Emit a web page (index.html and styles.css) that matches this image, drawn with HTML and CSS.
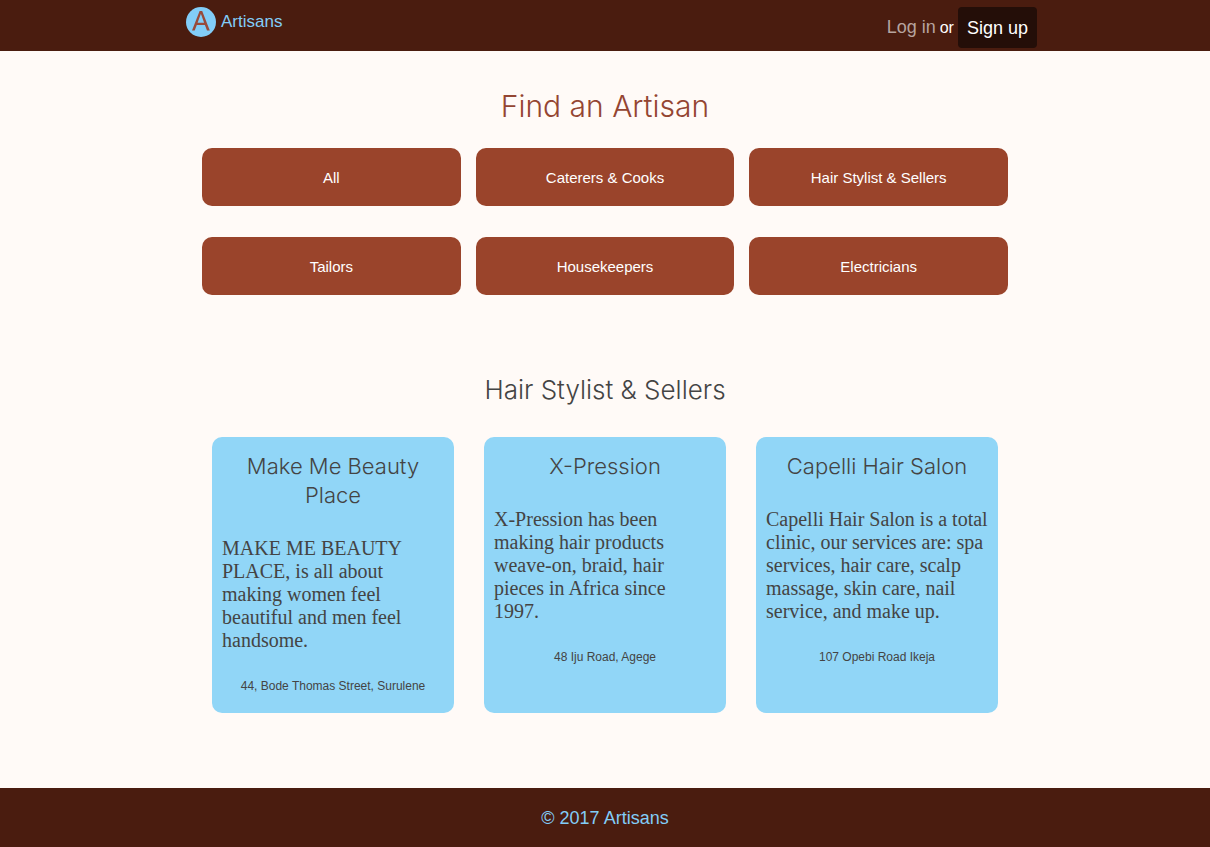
FILE: index.html
```html
<!DOCTYPE html>
<html lang="en">
<head>
<meta charset="utf-8">
<title>Artisans</title>
<meta name="viewport" content="width=device-width, initial-scale=1">
<link rel="stylesheet" href="styles.css">
</head>
<body>
<header class="site-header">
  <div class="header-inner">
    <a class="brand" href="#">
      <svg class="brand-logo" viewBox="0 0 30 30" aria-hidden="true">
        <circle cx="15" cy="15" r="15" fill="#82cdf8"/>
        <path d="M6 23.5 L13.6 4 H16.2 L23.8 23.5 H21 L18.9 17.9 H10.8 L8.7 23.5 Z M11.6 15.7 H18.1 L14.9 6.8 Z" fill="#984a3b" fill-rule="evenodd"/>
      </svg>
      <span>Artisans</span>
    </a>
    <nav class="account">
      <a class="login" href="#">Log in</a>
      <span class="or">or</span>
      <button class="signup" type="button">Sign up</button>
    </nav>
  </div>
</header>
<main class="main">
  <h1 class="page-title">Find an Artisan</h1>
  <div class="categories">
    <button class="category" type="button">All</button>
    <button class="category" type="button">Caterers &amp; Cooks</button>
    <button class="category" type="button">Hair Stylist &amp; Sellers</button>
    <button class="category" type="button">Tailors</button>
    <button class="category" type="button">Housekeepers</button>
    <button class="category" type="button">Electricians</button>
  </div>
  <h2 class="section-title">Hair Stylist &amp; Sellers</h2>
  <div class="cards">
    <article class="card">
      <h3 class="card-title">Make Me Beauty Place</h3>
      <p class="card-text">MAKE ME BEAUTY PLACE, is all about making women feel beautiful and men feel handsome.</p>
      <p class="card-address">44, Bode Thomas Street, Surulene</p>
    </article>
    <article class="card">
      <h3 class="card-title">X-Pression</h3>
      <p class="card-text">X-Pression has been making hair products weave-on, braid, hair pieces in Africa since<br>1997.</p>
      <p class="card-address">48 Iju Road, Agege</p>
    </article>
    <article class="card">
      <h3 class="card-title">Capelli Hair Salon</h3>
      <p class="card-text">Capelli Hair Salon is a total clinic, our services are: spa services, hair care, scalp massage, skin care, nail service, and make up.</p>
      <p class="card-address">107 Opebi Road Ikeja</p>
    </article>
  </div>
</main>
<footer class="site-footer">© 2017 Artisans</footer>
</body>
</html>
```
FILE: styles.css
```css
* { box-sizing: border-box; }
body {
  margin: 0;
  min-height: 100vh;
  display: flex;
  flex-direction: column;
  background: #fffaf7;
  color: #444;
  font-family: "Liberation Sans", Arial, sans-serif;
}
button { font: inherit; border: 0; cursor: pointer; }
a { text-decoration: none; }

.site-header { background: #4a1c0f; }
.header-inner {
  max-width: 864px;
  margin: 0 auto;
  padding: 7px 0 3px 13px;
  display: flex;
  justify-content: space-between;
  align-items: flex-start;
}
.brand {
  display: flex;
  align-items: center;
  gap: 5px;
  color: #82cdf8;
  font-size: 17px;
}
.brand-logo { width: 30px; height: 30px; }
.account {
  display: flex;
  align-items: center;
  gap: 4px;
  color: #fff;
}
.login { color: #b7a49f; font-size: 18px; }
.or { font-size: 16px; }
.signup {
  padding: 11px 9px 9px;
  border-radius: 4px;
  background: #240e08;
  color: #fff;
  font-size: 18px;
  line-height: 21px;
}

.main { flex: 1; padding: 35px 16px 75px; }
.page-title, .section-title, .card-title {
  margin: 0;
  font-family: Inter, "Liberation Sans", sans-serif;
  font-weight: 300;
  text-align: center;
}
.page-title {
  color: #944532;
  font-size: 30px;
  line-height: 40px;
}
.categories {
  max-width: 806px;
  margin: 22px auto 0;
  display: grid;
  grid-template-columns: repeat(3, 1fr);
  gap: 31px 15px;
}
.category {
  padding: 20px 10px 18px;
  border-radius: 10px;
  background: #9a442b;
  color: #fff;
  font-size: 15px;
  line-height: 20px;
}
.section-title {
  margin-top: 77px;
  font-size: 26px;
  line-height: 36px;
}
.cards {
  max-width: 786px;
  margin: 29px auto 0;
  display: grid;
  grid-template-columns: repeat(3, 1fr);
  gap: 30px;
}
.card {
  padding: 15px 10px 20px;
  border-radius: 10px;
  background: #91d6f7;
}
.card-title { font-size: 22px; line-height: 29px; }
.card-text {
  margin: 27px 0 0;
  font-family: "Liberation Serif", "Times New Roman", serif;
  font-size: 20px;
  line-height: 23px;
}
.card-address {
  margin: 27px 0 0;
  font-size: 12px;
  line-height: 14px;
  text-align: center;
}
.site-footer {
  padding: 21px 20px 19px;
  background: #4a1c0f;
  color: #82cdf8;
  font-size: 18px;
  line-height: 19px;
  text-align: center;
}
```
